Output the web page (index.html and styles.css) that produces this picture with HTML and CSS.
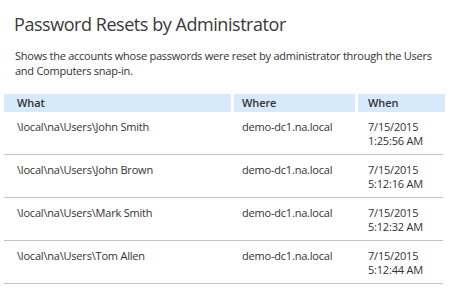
FILE: index.html
```html
<!DOCTYPE html>
<html>
<head>
<meta charset="utf-8">
<link rel="stylesheet" href="styles.css">
</head>
<body>
<div class="page">
  <h1 class="title">Password Resets by Administrator</h1>
  <p class="desc">Shows the accounts whose passwords were reset by administrator through the Users and Computers snap-in.</p>
  <div class="table">
    <div class="head">
      <div class="hcell c1">What</div>
      <div class="hcell c2">Where</div>
      <div class="hcell c3">When</div>
    </div>
    <div class="row">
      <div class="cell c1">\local\na\Users\John Smith</div>
      <div class="cell c2">demo-dc1.na.local</div>
      <div class="cell c3">7/15/2015<br>1:25:56 AM</div>
    </div>
    <div class="row">
      <div class="cell c1">\local\na\Users\John Brown</div>
      <div class="cell c2">demo-dc1.na.local</div>
      <div class="cell c3">7/15/2015<br>5:12:16 AM</div>
    </div>
    <div class="row">
      <div class="cell c1">\local\na\Users\Mark Smith</div>
      <div class="cell c2">demo-dc1.na.local</div>
      <div class="cell c3">7/15/2015<br>5:12:32 AM</div>
    </div>
    <div class="row">
      <div class="cell c1">\local\na\Users\Tom Allen</div>
      <div class="cell c2">demo-dc1.na.local</div>
      <div class="cell c3">7/15/2015<br>5:12:44 AM</div>
    </div>
  </div>
</div>
</body>
</html>
```
FILE: styles.css
```css
html, body {
  margin: 0;
  padding: 0;
  background: #ffffff;
}
body {
  font-family: "Open Sans", "Noto Sans", sans-serif;
  color: #333333;
}
.page {
  padding: 11px 0 0 0;
}
.title {
  margin: 0 0 0 14px;
  font-size: 18px;
  font-weight: 400;
  line-height: 26px;
  color: #3a3a3a;
  letter-spacing: -0.45px;
}
.desc {
  margin: 11px 0 0 15px;
  width: 432px;
  font-size: 11px;
  line-height: 15px;
  color: #333333;
  letter-spacing: -0.25px;
}
.table {
  margin: 16px 0 0 4px;
  width: 441px;
}
.head {
  display: grid;
  grid-template-columns: 227px 121px 87px;
  column-gap: 3px;
}
.hcell {
  background: #d6eafc;
  height: 18px;
  line-height: 18px;
  font-size: 11px;
  font-weight: 600;
  color: #333333;
  letter-spacing: -0.1px;
}
.row {
  display: grid;
  grid-template-columns: 227px 121px 87px;
  column-gap: 3px;
  width: 439px;
  border-bottom: 1px solid #c4c4c4;
  height: 43px;
  box-sizing: border-box;
  padding-top: 8px;
}
.cell {
  font-size: 11px;
  line-height: 14px;
  color: #333333;
  letter-spacing: -0.2px;
}
.c1 { padding-left: 13px; }
.c2 { padding-left: 8px; }
.c3 { padding-left: 10px; }
```
